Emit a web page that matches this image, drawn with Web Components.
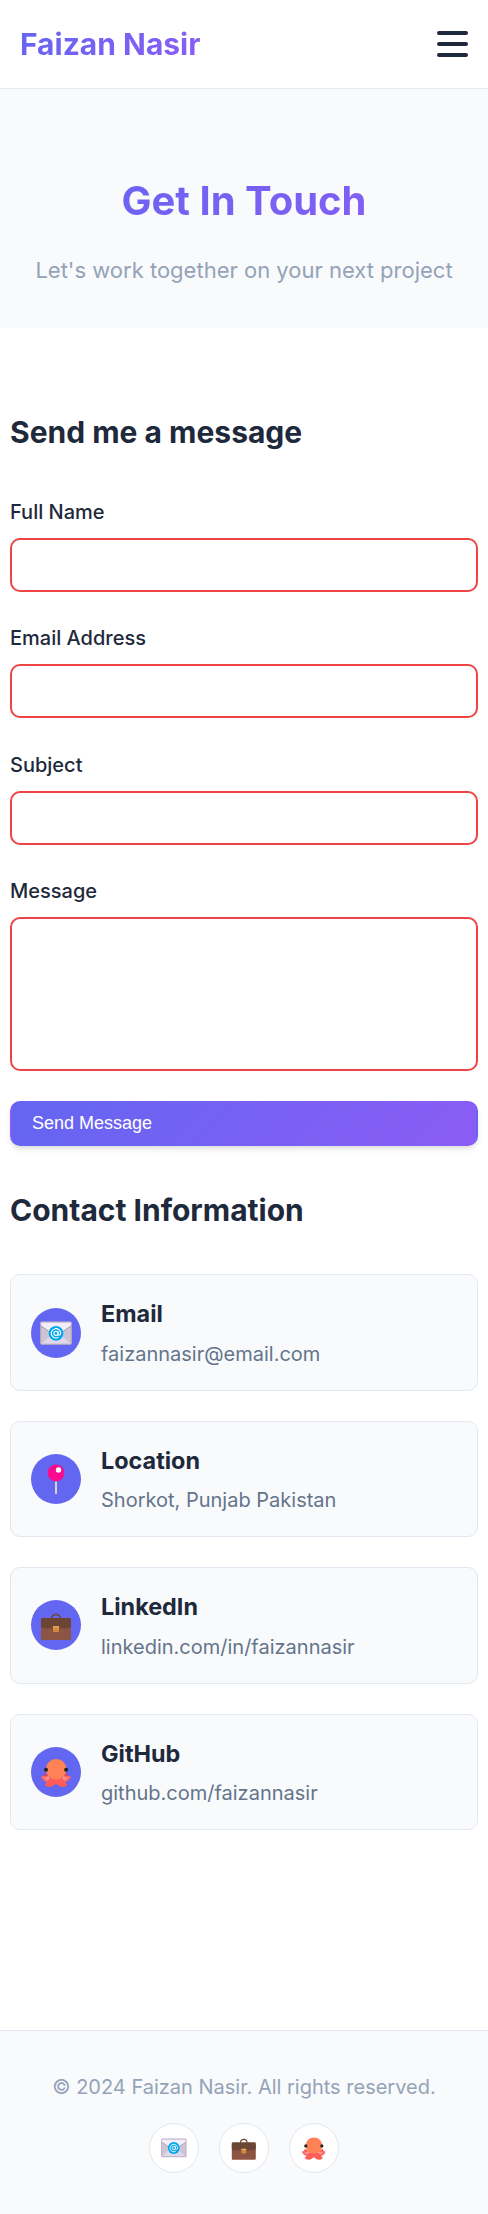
<!DOCTYPE html>
<html lang="en">
<head>
<meta charset="utf-8">
<title>Contact - Faizan Nasir</title>
<style>
body{margin:0;background:#fff;font-family:Inter,"Liberation Sans",sans-serif;font-size:20px;line-height:1.6;color:#1e293b;
--primary:#6366f1;--secondary:#8b5cf6;--muted:#94a3b8;--soft:#64748b;--panel:#f8fafc;--line:#e2e8f0}
</style>
</head>
<body>
<contact-page></contact-page>
<script>
const define = (name, html) => customElements.define(name, class extends HTMLElement {
  constructor() {
    super();
    this.attachShadow({ mode: 'open' }).innerHTML = typeof html === 'function' ? html(this) : html;
  }
});

const glyphs = {
  mail: `<rect x=".5" y="4.8" width="31" height="22.6" rx=".8" fill="#cdc4d6"/>
    <path d="M1 27 12.5 17h7L31 27z" fill="#e1d8ec"/>
    <path d="M1 5.2h30v3.6L18 18h-4L1 8.8z" fill="#f3eef8"/>
    <path d="M1 9l10 6.8M31 9l-10 6.8" fill="none" stroke="#998ea4" stroke-width=".9"/>
    <rect x=".7" y="5" width="30.6" height="22.2" rx=".8" fill="none" stroke="#b4aabd" stroke-width="1"/>
    <circle cx="16" cy="16.3" r="7.4" fill="#00a6ed"/>
    <circle cx="16" cy="16.3" r="2.1" fill="none" stroke="#fff" stroke-width="1.1"/>
    <path d="M18.1 14.2v2.8c0 1.9 2.6 1.4 2.6-.7a4.7 4.7 0 1 0-2.2 4" fill="none" stroke="#fff" stroke-width="1.1"/>`,
  pin: `<path d="M15 17h2v13.2a1 1 0 0 1-2 0z" fill="#d3d3d3"/><circle cx="16" cy="10" r="8.4" fill="#fa0a8c"/><circle cx="18.5" cy="7" r="2.7" fill="#fff"/>`,
  case: `<path d="M11.8 9.5C12 6.6 13.4 5.4 16 5.4s4 1.2 4.2 4.1" fill="none" stroke="#6d4534" stroke-width="1.5"/>
    <path d="M1 12h30v17.6q0 1.4-1.4 1.4H2.4Q1 31 1 29.6z" fill="#8c5543"/>
    <path d="M2.6 9h26.8q1.6 0 1.6 1.6V16q0 3.2-3.2 3.2H4.2Q1 19.2 1 16v-5.4Q1 9 2.6 9z" fill="#6d4534"/>
    <rect x="13" y="17.3" width="6" height="5.7" rx=".7" fill="#d3883e"/><path d="M13 17.3h6v1.4h-6z" fill="#f3ad61"/>`,
  octopus: `<path d="M5 17.6 8.5 20l-3 3-2.5-1zM27 17.6 23.5 20l3 3 2.5-1z" fill="#f8312f"/>
    <path d="M1.2 20.6q5-1.5 9-1.1l-2 6.8q-5.5-.3-7-5.7zM30.8 20.6q-5-1.5-9-1.1l2 6.8q5.5-.3 7-5.7z" fill="#ff6663"/>
    <path d="M4 22l6-2-1.5 5zM28 22l-6-2 1.5 5z" fill="#ff8f8b"/>
    <path d="M11 21h10l6.5 8q-6 4-10.5-.5L16 27.5l-1 1Q10.5 33 4.5 29z" fill="#ff5c58"/>
    <rect x="5.8" y="3" width="20.8" height="20.4" rx="10.2" fill="#ff8257"/>
    <circle cx="6" cy="13.7" r="2" fill="#212121"/><circle cx="26.1" cy="13.7" r="2" fill="#212121"/>`
};
define('emoji-icon', el => `<style>:host{display:block;width:32px;height:32px}svg{display:block;width:100%;height:100%;overflow:visible}</style><svg viewBox="0 0 32 32">${glyphs[el.getAttribute('name')]}</svg>`);

define('menu-button', `<style>:host{display:flex;flex-direction:column;gap:7px;width:31px}span{height:4px;border-radius:2px;background:#1e293b}</style><span></span><span></span><span></span>`);

define('site-header', `<style>
:host{display:flex;align-items:center;justify-content:space-between;height:88px;padding:0 20px;border-bottom:1px solid var(--line);background:#fff}
.logo{font-size:30px;font-weight:700;line-height:48px;background:linear-gradient(135deg,var(--primary),var(--secondary));-webkit-background-clip:text;color:transparent}
</style><div class="logo"><slot></slot></div><menu-button></menu-button>`);

define('page-hero', `<style>
:host{display:block;box-sizing:border-box;height:239px;padding:80px 20px 40px;background:var(--panel);text-align:center}
h1{margin:0 0 20px;font-size:40px;line-height:64px;font-weight:700;background:linear-gradient(135deg,var(--primary),var(--secondary));-webkit-background-clip:text;color:transparent}
p{margin:0;font-size:22px;line-height:35px;color:var(--muted)}
</style><h1><slot></slot></h1><p><slot name="sub"></slot></p>`);

define('section-title', `<style>:host{display:block;margin-bottom:40px}h2{margin:0;font-size:30px;line-height:48px;font-weight:700}</style><h2><slot></slot></h2>`);

define('form-field', el => `<style>
:host{display:block;margin-bottom:30.4px}label{display:block;margin-bottom:10px;line-height:32px;font-weight:500}
input,textarea{display:block;box-sizing:border-box;width:100%;height:54px;margin:0;padding:12px;border:2px solid #ef4444;border-radius:10px;background:#fff;outline:0;font:inherit}
textarea{height:154px;resize:none}
</style><label><slot></slot></label>${el.hasAttribute('multiline') ? '<textarea></textarea>' : '<input type="text">'}`);

define('send-button', `<style>
:host{display:block;margin:-.4px 0 40.2px}
button{display:block;box-sizing:border-box;width:100%;height:45px;padding:0 20px;border:2px solid transparent;border-radius:10px;background:linear-gradient(135deg,var(--primary),var(--secondary));box-shadow:0 4px 6px -1px rgba(0,0,0,.1),0 2px 4px -1px rgba(0,0,0,.06);color:#fff;text-align:left;font:18px "Liberation Sans",Arial,sans-serif}
</style><button type="button"><slot></slot></button>`);

define('contact-card', el => `<style>
:host{display:flex;align-items:center;gap:20px;box-sizing:border-box;height:116.4px;padding:20px;border:1px solid var(--line);border-radius:10px;background:var(--panel)}
.badge{display:flex;align-items:center;justify-content:center;width:50px;height:50px;border-radius:50%;background:var(--primary)}
h3{margin:0 0 5px;font-size:23.4px;line-height:37.4px;font-weight:700}
p{margin:0;line-height:32px;color:var(--soft)}
</style><div class="badge"><emoji-icon name="${el.getAttribute('icon')}"></emoji-icon></div><div><h3><slot></slot></h3><p><slot name="value"></slot></p></div>`);

define('site-footer', `<style>
:host{display:block;height:184px;box-sizing:border-box;padding-top:40px;border-top:1px solid var(--line);background:var(--panel);text-align:center}
p{margin:0 0 20px;line-height:32px;color:var(--muted)}
nav{display:flex;justify-content:center;gap:20px}
a{display:flex;align-items:center;justify-content:center;box-sizing:border-box;width:50px;height:50px;border:1px solid var(--line);border-radius:50%;background:#fff}
emoji-icon{width:25.6px;height:25.6px}
</style><p><slot></slot></p><nav><a><emoji-icon name="mail"></emoji-icon></a><a><emoji-icon name="case"></emoji-icon></a><a><emoji-icon name="octopus"></emoji-icon></a></nav>`);

define('contact-page', `<style>
:host{display:flex;flex-direction:column;min-height:2214px}
main{flex:1;padding:80px 10px 0}.cards{display:grid;gap:30px}
</style>
<site-header>Faizan Nasir</site-header>
<page-hero>Get In Touch<span slot="sub">Let's work together on your next project</span></page-hero>
<main>
<section-title>Send me a message</section-title>
<form-field>Full Name</form-field><form-field>Email Address</form-field><form-field>Subject</form-field><form-field multiline>Message</form-field>
<send-button>Send Message</send-button>
<section-title>Contact Information</section-title>
<div class="cards">
<contact-card icon="mail">Email<span slot="value">faizannasir@email.com</span></contact-card>
<contact-card icon="pin">Location<span slot="value">Shorkot, Punjab Pakistan</span></contact-card>
<contact-card icon="case">LinkedIn<span slot="value">linkedin.com/in/faizannasir</span></contact-card>
<contact-card icon="octopus">GitHub<span slot="value">github.com/faizannasir</span></contact-card>
</div>
</main>
<site-footer>© 2024 Faizan Nasir. All rights reserved.</site-footer>`);
</script>
</body>
</html>
